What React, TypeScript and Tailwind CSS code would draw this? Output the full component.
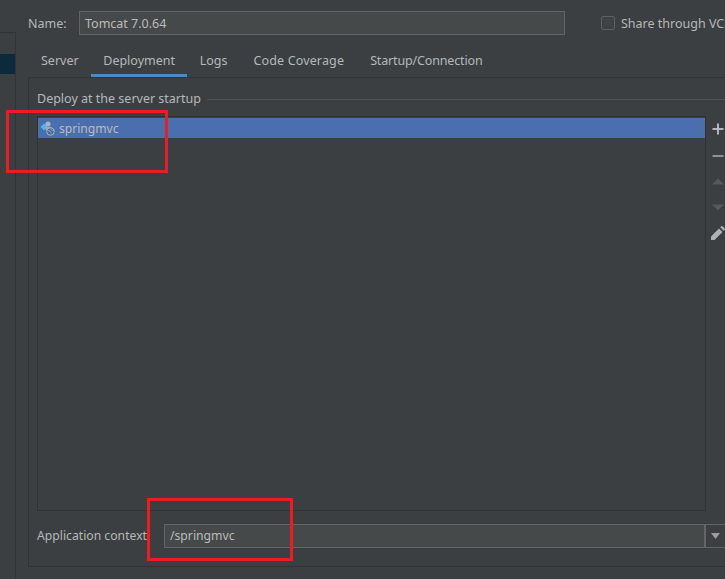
const font = { fontFamily: '"Noto Sans", "Noto Sans CJK SC", sans-serif' };

function DeployIcon() {
  return (
    <svg width="16" height="16" viewBox="0 0 16 16" className="shrink-0">
      <path d="M4 3.500 7.500 7 4 10.500 .5 7z" fill="#4db5ee" />
      <circle cx="8" cy="4" r="2.600" fill="#a9b4c2" />
      <path d="M5.500 7h6v3h-6z" fill="#9aa7b8" />
      <circle cx="10.500" cy="11.500" r="3.800" fill="#46689f" stroke="#aab6c8" strokeWidth="1" />
      <path d="M8 10.500c2 .2 3 1 3 3M11 8.500c-.5 1.500 1 2 3 2" stroke="#aab6c8" strokeWidth=".8" fill="none" />
    </svg>
  );
}

function ListToolbar() {
  return (
    <div className="w-[20px] flex flex-col items-center shrink-0 pt-[6px] pl-[3px]">
      <svg width="14" height="14" viewBox="0 0 14 14" className="shrink-0">
        <path d="M6 1.500h2v4.500h4.500v2H8v4.500H6V8H1.500V6H6z" fill="#b4b8bb" />
      </svg>
      <svg width="14" height="14" viewBox="0 0 14 14" className="mt-[13px] shrink-0">
        <path d="M1.500 6h11v2h-11z" fill="#8f9396" />
      </svg>
      <svg width="14" height="14" viewBox="0 0 14 14" className="mt-[12px] shrink-0">
        <path d="M7 3.500 13 9.500H1z" fill="#55595b" />
      </svg>
      <svg width="14" height="14" viewBox="0 0 14 14" className="mt-[11px] shrink-0">
        <path d="M1 4.500h12L7 10.500z" fill="#55595b" />
      </svg>
      <svg width="16" height="16" viewBox="0 0 16 16" className="mt-[11px] shrink-0">
        <path d="M1 15v-3.500L9 3.500 12.500 7 4.500 15z" fill="#aeb2b5" />
        <path d="M10.200 2.300 12 .8 15.200 4 13.700 5.800z" fill="#aeb2b5" />
      </svg>
    </div>
  );
}

export default function App() {
  return (
    <div className="relative w-[725px] h-[579px] overflow-hidden bg-[#3c3f41] text-[#b4b8bb] text-[12.5px] flex" style={font}>
      {/* Left tree stub */}
      <div className="w-[16px] shrink-0 pt-[32px]">
        <div className="h-[547px] border-t border-r border-[#313335] pt-[21px]">
          <div className="h-[20px] bg-[#0d293e]" />
        </div>
      </div>

      <div className="flex-1 min-w-0 pl-[12px] flex flex-col">
        {/* Name row */}
        <div className="flex items-center h-[24px] mt-[11px]">
          <span className="w-[51px] shrink-0 pt-[2px]">Name:</span>
          <div className="w-[486px] h-[24px] shrink-0 px-[5px] pt-[2px] flex items-center bg-[#45494a] border border-[#646464] text-[#bbbbbb]">
            Tomcat 7.0.64
          </div>
          <div className="w-[14px] h-[14px] ml-[36px] shrink-0 border border-[#5e6060] rounded-[2px] bg-[#3f4244]" />
          <span className="ml-[6px] pt-[2px] whitespace-nowrap">Share through VCS</span>
        </div>

        {/* Tabs */}
        <div className="flex h-[28px] mt-[14px] ml-[1px]">
          <div className="px-[12px] pb-[4px] flex items-center">Server</div>
          <div className="w-[96px] pb-[1px] pl-[1px] flex items-center justify-center border-b-[3px] border-[#4a88c7]">Deployment</div>
          <div className="px-[13px] pb-[4px] flex items-center">Logs</div>
          <div className="px-[13px] pb-[4px] flex items-center tracking-[0.15px]">Code Coverage</div>
          <div className="px-[13px] pb-[4px] flex items-center tracking-[-0.15px]">Startup/Connection</div>
        </div>

        {/* Panel */}
        <div className="h-[490px] border-t border-l border-b border-[#313335] pl-[8px] flex flex-col">
          <div className="flex items-center h-[20px] mt-[11px]">
            <span className="whitespace-nowrap">Deploy at the server startup</span>
            <div className="flex-1 h-px bg-[#515151] ml-[6px]" />
          </div>
          <div className="flex h-[395px] mt-[7px]">
            <div className="w-[669px] shrink-0 border border-[#2f3133] pt-[1px]">
              <div className="h-[20px] bg-[#4b6eaf] flex items-center gap-[3px] pl-[2px] text-[12.1px] text-[#bbbbbb]">
                <DeployIcon />
                <span className="pt-[2px]">springmvc</span>
              </div>
            </div>
            <ListToolbar />
          </div>
          <div className="flex items-center h-[24px] mt-[13px]">
            <span className="w-[127px] shrink-0 whitespace-nowrap text-[12.2px]">Application context:</span>
            <div className="flex-1 h-[24px] px-[5px] flex items-center bg-[#45494a] border border-[#646464] text-[12.2px] text-[#bbbbbb]">
              /springmvc
            </div>
            <div className="w-[20px] h-[24px] shrink-0 border-y border-l border-[#646464] flex items-center justify-center">
              <svg width="10" height="6" viewBox="0 0 10 6">
                <path d="M0 0h9L4.500 6z" fill="#9a9da0" />
              </svg>
            </div>
          </div>
        </div>
      </div>

      {/* Red annotation boxes */}
      <div className="absolute left-[6px] top-[110px] w-[162px] h-[63px] border-[3px] border-[#ed1c24]" />
      <div className="absolute left-[147px] top-[498px] w-[146px] h-[63px] border-[3px] border-[#ed1c24]" />
    </div>
  );
}
